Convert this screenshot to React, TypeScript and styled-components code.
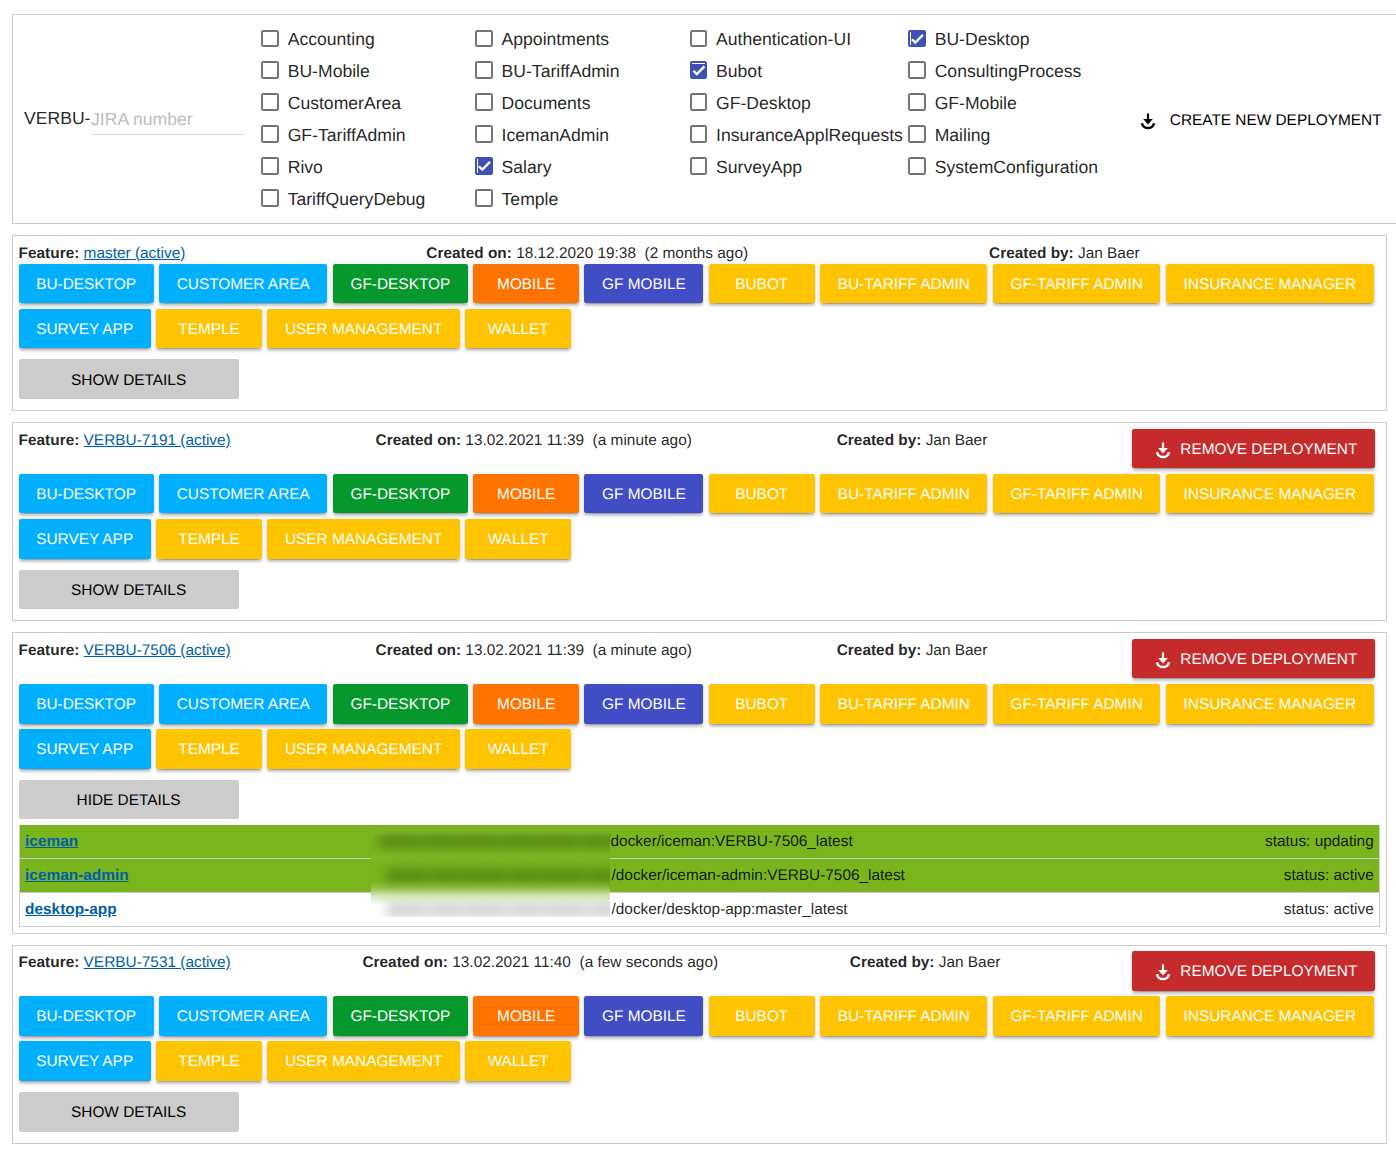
import React, { useState } from "react";
import styled, { createGlobalStyle } from "styled-components";

const GlobalStyle = createGlobalStyle`
  * { box-sizing: border-box; }
  html, body { margin: 0; background: #fff; overflow: hidden; }
  body {
    font-family: "Liberation Sans", Arial, sans-serif;
    font-size: 15.4px;
    line-height: 17.6px;
    color: rgba(0, 0, 0, 0.87);
    text-rendering: geometricPrecision;
  }
  button, input { text-rendering: inherit; }
`;

const Page = styled.main`
  width: 1396px;
  height: 1149px;
  padding: 14px 9px 0 12px;
  overflow: hidden;
  display: flex;
  flex-direction: column;
  gap: 11.3px;
`;

const Toolbar = styled.section`
  flex: none;
  width: 1400px;
  height: 209.85px;
  border: 1px solid #ccc;
  display: flex;
  align-items: center;
`;

const TicketField = styled.label`
  display: flex;
  align-items: center;
  width: 248.2px;
  padding-left: 11px;
  font-size: 17.6px;
  line-height: 20px;
`;

const TicketPrefix = styled.span`
  width: 67px;
  padding-bottom: 2px;
`;

const TicketInput = styled.input`
  width: 154px;
  height: 31px;
  margin-top: 1px;
  padding: 2px 0 0;
  border: 0;
  border-bottom: 1px solid #d9d9d9;
  outline: none;
  background: none;
  font: inherit;
  color: inherit;
  &::placeholder {
    color: #bdbdbd;
    opacity: 1;
  }
`;

const AppGrid = styled.div`
  align-self: flex-start;
  display: grid;
  grid-template-columns: 213.9px 214.5px 218.6px 215px;
  grid-auto-rows: 31.9px;
  padding-top: 7.4px;
`;

const AppOption = styled.label`
  display: flex;
  align-items: center;
  gap: 8.9px;
  font-size: 17.6px;
  line-height: 20px;
  white-space: nowrap;
`;

const OptionText = styled.span`
  padding-top: 1.6px;
`;

const HiddenInput = styled.input`
  appearance: none;
  width: 0;
  height: 0;
  margin: 0 -8.9px 0 0;
`;

const Box = styled.span<{ $checked: boolean }>`
  display: flex;
  width: 17.6px;
  height: 17.6px;
  border: 2px solid ${(p) => (p.$checked ? "#3f51b5" : "#757575")};
  border-radius: 2.2px;
  background: ${(p) => (p.$checked ? "#3f51b5" : "transparent")};
`;

const Tick = styled.svg<{ $seam: "top" | "left" }>`
  width: 100%;
  height: 100%;
  ${(p) => (p.$seam === "top" ? "border-top" : "border-left")}: 1px solid #fff;
`;

const CreateButton = styled.button`
  display: flex;
  align-items: center;
  gap: 13.6px;
  margin: 3.8px 0 0 17px;
  padding: 0;
  border: 0;
  background: none;
  font: inherit;
  color: #000;
  white-space: nowrap;
`;

const IconSlot = styled.svg`
  flex: none;
  width: 16px;
  height: 18px;
  margin: 2.6px 0 0;
`;

const Card = styled.section<{ $open: boolean }>`
  flex: none;
  width: 1375px;
  border: 1px solid #ccc;
  padding: 5.5px 5.4px 5.5px 5.6px;
  margin-bottom: ${(p) => (p.$open ? -0.15 : 0)}px;
`;

const CardHeader = styled.header<{ $tall: boolean }>`
  display: flex;
  justify-content: space-between;
  align-items: flex-start;
  height: ${(p) => (p.$tall ? 45.1 : 22)}px;
`;

const Fact = styled.div`
  padding-top: 3.2px;
  white-space: pre;
`;

const FeatureLink = styled.a`
  color: #005ea8;
  text-decoration: underline;
`;

const RemoveButton = styled.button`
  display: flex;
  align-items: center;
  gap: 9.5px;
  height: 39.6px;
  width: 243px;
  margin: 0 5.5px 0 0;
  padding: 2px 0 0 22.7px;
  border: 0;
  border-radius: 2.2px;
  background: #c62b2b;
  color: #fff;
  font: inherit;
  white-space: nowrap;
  box-shadow: 0 3.3px 1.1px -2.2px rgba(0, 0, 0, 0.2), 0 2.2px 2.2px 0 rgba(0, 0, 0, 0.14),
    0 1.1px 5.5px 0 rgba(0, 0, 0, 0.12);
`;

const AppButtons = styled.div`
  display: flex;
  flex-wrap: wrap;
  gap: 5.5px;
`;

const AppButton = styled.button<{ $color: string }>`
  height: 39.6px;
  min-width: 105.6px;
  padding: 2px 17.6px 0;
  border: 0;
  border-radius: 2.2px;
  background: ${(p) => p.$color};
  color: #fff;
  font: inherit;
  white-space: nowrap;
  box-shadow: 0 3.3px 1.1px -2.2px rgba(0, 0, 0, 0.2), 0 2.2px 2.2px 0 rgba(0, 0, 0, 0.14),
    0 1.1px 5.5px 0 rgba(0, 0, 0, 0.12);
`;

const DetailsButton = styled.button`
  display: block;
  width: 220px;
  height: 39.6px;
  margin: 11px 0 5.5px;
  padding: 2.7px 0 0;
  border: 0;
  border-radius: 2.2px;
  background: #ccc;
  color: #000;
  font: inherit;
`;

const DetailsTable = styled.div`
  position: relative;
  width: 1361px;
  height: 102.25px;
  border: 1px solid #ccc;
  border-width: 0 1px;
`;

const DetailRow = styled.div<{ $updated: boolean }>`
  display: flex;
  height: 34px;
  padding: 8px 4.9px 0 5.5px;
  border-bottom: 1px solid #ccc;
  background: ${(p) => (p.$updated ? "#7ab51d" : "#fff")};
`;

const DetailName = styled.div`
  width: 577.6px;
  font-weight: bold;
`;

const DetailImage = styled.span<{ $indent: number }>`
  padding-left: ${(p) => p.$indent}px;
`;

const DetailStatus = styled.span`
  margin-left: auto;
`;

const Redaction = styled.div`
  position: absolute;
  left: 351.4px;
  top: 6px;
  width: 239px;
  height: 86px;
  overflow: hidden;
  background: linear-gradient(
    #86bc33 0,
    #7ab51d 6px,
    #7ab51d 21px,
    #80b828 26px,
    #7ab51d 33px,
    #7ab51d 50px,
    #93c249 57px,
    #d6e8ba 65px,
    #fff 74px
  );
`;

const Smudge = styled.div<{ $top: number; $left: number; $tone: string; $gap: string }>`
  position: absolute;
  top: ${(p) => p.$top}px;
  left: ${(p) => p.$left}px;
  width: 260px;
  height: 13px;
  background: repeating-linear-gradient(
    90deg,
    ${(p) => p.$tone} 0 38px,
    ${(p) => p.$gap} 42px 44px,
    ${(p) => p.$tone} 48px 74px,
    ${(p) => p.$gap} 77px 79px
  );
  filter: blur(5.5px);
`;

type Feature = { name: string; date: string; ago: string; removable: boolean; open?: boolean };

const apps = [
  "Accounting", "Appointments", "Authentication-UI", "BU-Desktop",
  "BU-Mobile", "BU-TariffAdmin", "Bubot", "ConsultingProcess",
  "CustomerArea", "Documents", "GF-Desktop", "GF-Mobile",
  "GF-TariffAdmin", "IcemanAdmin", "InsuranceApplRequests", "Mailing",
  "Rivo", "Salary", "SurveyApp", "SystemConfiguration",
  "TariffQueryDebug", "Temple",
];

const palette = {
  blue: "#00b0ff",
  green: "#06982d",
  orange: "#ff7300",
  indigo: "#404dc5",
  amber: "#ffc400",
};

const targets: [string, keyof typeof palette][] = [
  ["BU-DESKTOP", "blue"],
  ["CUSTOMER AREA", "blue"],
  ["GF-DESKTOP", "green"],
  ["MOBILE", "orange"],
  ["GF MOBILE", "indigo"],
  ["BUBOT", "amber"],
  ["BU-TARIFF ADMIN", "amber"],
  ["GF-TARIFF ADMIN", "amber"],
  ["INSURANCE MANAGER", "amber"],
  ["SURVEY APP", "blue"],
  ["TEMPLE", "amber"],
  ["USER MANAGEMENT", "amber"],
  ["WALLET", "amber"],
];

const features: Feature[] = [
  { name: "master", date: "18.12.2020 19:38", ago: "2 months ago", removable: false },
  { name: "VERBU-7191", date: "13.02.2021 11:39", ago: "a minute ago", removable: true },
  { name: "VERBU-7506", date: "13.02.2021 11:39", ago: "a minute ago", removable: true, open: true },
  { name: "VERBU-7531", date: "13.02.2021 11:40", ago: "a few seconds ago", removable: true },
];

const services = [
  { name: "iceman", image: "/docker/iceman:VERBU-7506_latest", status: "updating", updated: true, indent: 3.6 },
  { name: "iceman-admin", image: "/docker/iceman-admin:VERBU-7506_latest", status: "active", updated: true, indent: 8.8 },
  { name: "desktop-app", image: "/docker/desktop-app:master_latest", status: "active", updated: false, indent: 8.8 },
];

const DeployIcon = () => (
  <IconSlot viewBox="0 0 16 18" fill="none" stroke="currentColor">
    <path d="M8 .5v7" strokeWidth="2.2" />
    <path d="M3.2 6h9.6L8 11.4z" fill="currentColor" stroke="none" />
    <path d="M2 10.2a6.1 6 0 0 0 12 0" strokeWidth="2.5" />
  </IconSlot>
);

function AppCheckbox({ name }: { name: string }) {
  const [checked, setChecked] = useState(["BU-Desktop", "Bubot", "Salary"].includes(name));
  return (
    <AppOption>
      <HiddenInput type="checkbox" checked={checked} onChange={() => setChecked(!checked)} />
      <Box $checked={checked}>
        {checked && (
          <Tick $seam={name === "Bubot" ? "top" : "left"} viewBox="0 0 24 24" fill="none" stroke="#fff">
            <path d="M1.73 12.91 8.1 19.28 22.79 4.59" strokeWidth="4.4" />
          </Tick>
        )}
      </Box>
      <OptionText>{name}</OptionText>
    </AppOption>
  );
}

function FeatureCard({ feature }: { feature: Feature }) {
  const [open, setOpen] = useState(!!feature.open);
  return (
    <Card $open={open}>
      <CardHeader $tall={feature.removable}>
        <Fact>
          <b>Feature:</b> <FeatureLink>{feature.name} (active)</FeatureLink>
        </Fact>
        <Fact>
          <b>Created on:</b> {feature.date}{"  "}({feature.ago})
        </Fact>
        <Fact>
          <b>Created by:</b> Jan Baer
        </Fact>
        {feature.removable ? (
          <RemoveButton>
            <DeployIcon />
            REMOVE DEPLOYMENT
          </RemoveButton>
        ) : (
          <span />
        )}
      </CardHeader>
      <AppButtons>
        {targets.map(([label, color]) => (
          <AppButton key={label} $color={palette[color]}>
            {label}
          </AppButton>
        ))}
      </AppButtons>
      <DetailsButton onClick={() => setOpen(!open)}>{open ? "HIDE DETAILS" : "SHOW DETAILS"}</DetailsButton>
      {open && (
        <DetailsTable>
          {services.map((s) => (
            <DetailRow key={s.name} $updated={s.updated}>
              <DetailName>
                <FeatureLink>{s.name}</FeatureLink>
              </DetailName>
              <DetailImage $indent={s.indent}>{s.image}</DetailImage>
              <DetailStatus>status: {s.status}</DetailStatus>
            </DetailRow>
          ))}
          <Redaction>
            <Smudge $top={4} $left={8} $tone="rgba(72,112,14,.66)" $gap="rgba(72,112,14,.45)" />
            <Smudge $top={38} $left={15} $tone="rgba(72,112,14,.66)" $gap="rgba(72,112,14,.45)" />
            <Smudge $top={72} $left={15} $tone="rgba(120,120,120,.36)" $gap="rgba(120,120,120,.24)" />
          </Redaction>
        </DetailsTable>
      )}
    </Card>
  );
}

export default function App() {
  return (
    <Page>
      <GlobalStyle />
      <Toolbar>
        <TicketField>
          <TicketPrefix>VERBU-</TicketPrefix>
          <TicketInput placeholder="JIRA number" />
        </TicketField>
        <AppGrid>
          {apps.map((name) => (
            <AppCheckbox key={name} name={name} />
          ))}
        </AppGrid>
        <CreateButton>
          <DeployIcon />
          CREATE NEW DEPLOYMENT
        </CreateButton>
      </Toolbar>
      {features.map((f) => (
        <FeatureCard key={f.name} feature={f} />
      ))}
    </Page>
  );
}
